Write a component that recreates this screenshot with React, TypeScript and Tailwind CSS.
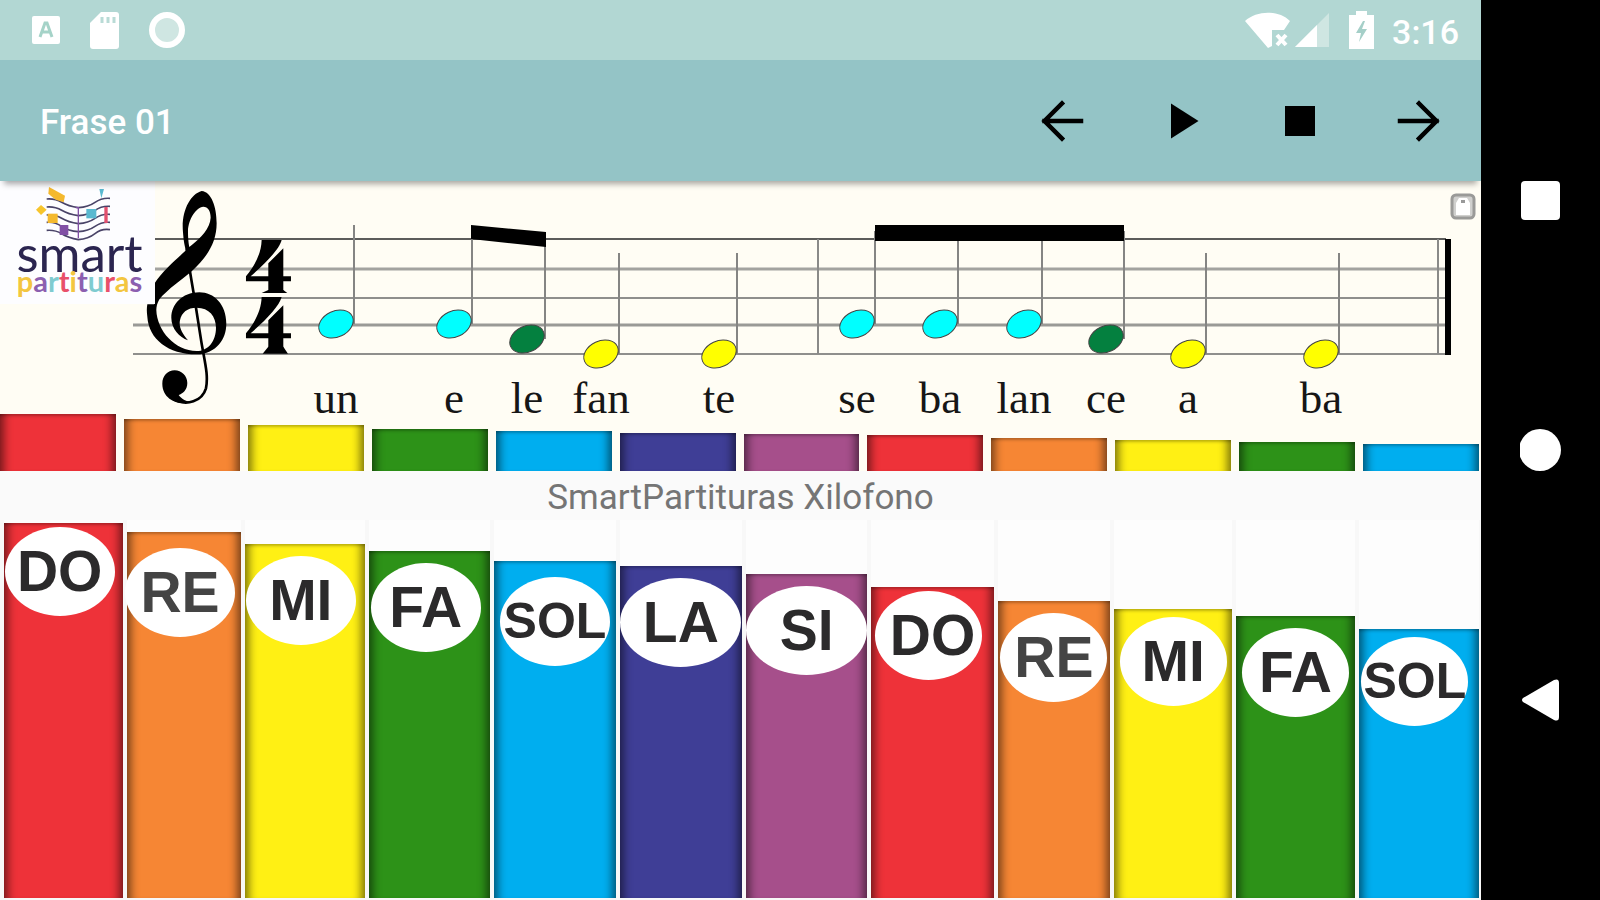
import { clsx } from 'clsx';

const RED = 'bg-[#ee3239]';
const ORANGE = 'bg-[#f68634]';
const YELLOW = 'bg-[#fff014]';
const GREEN = 'bg-[#2d9218]';
const BLUE = 'bg-[#00aeef]';
const INDIGO = 'bg-[#3f3e96]';
const PURPLE = 'bg-[#a64f8b]';

const edge =
  'shadow-[inset_12px_0_8px_-8px_rgba(0,0,0,0.5),inset_-12px_0_8px_-8px_rgba(0,0,0,0.5),inset_0_4px_3px_-2px_rgba(0,0,0,0.25)]';

// width is a flex weight, height is out of 378
const keys = [
  { note: 'DO', color: RED, width: 119, height: 375, place: 'pt-1 pr-2', oval: 'w-[110px]' },
  { note: 'RE', color: ORANGE, width: 113, height: 366, place: 'pt-4 pr-2', oval: 'w-[110px]', soft: true },
  { note: 'MI', color: YELLOW, width: 120, height: 354, place: 'pt-3 pr-2', oval: 'w-[110px]' },
  { note: 'FA', color: GREEN, width: 121, height: 347, place: 'pt-3 pr-2', oval: 'w-[110px]' },
  { note: 'SOL', color: BLUE, width: 121, height: 337, place: 'pt-4', oval: 'w-[110px]' },
  { note: 'LA', color: INDIGO, width: 122, height: 332, place: 'pt-3', oval: 'w-[121px]' },
  { note: 'SI', color: PURPLE, width: 121, height: 324, place: 'pt-3', oval: 'w-[121px]' },
  { note: 'DO', color: RED, width: 122, height: 311, place: 'pt-1 pr-2', oval: 'w-[107px] pl-2' },
  { note: 'RE', color: ORANGE, width: 112, height: 297, place: 'pt-3', oval: 'w-[107px]', soft: true },
  { note: 'MI', color: YELLOW, width: 118, height: 289, place: 'pt-2', oval: 'w-[107px]' },
  { note: 'FA', color: GREEN, width: 118, height: 282, place: 'pt-3', oval: 'w-[107px]' },
  { note: 'SOL', color: BLUE, width: 120, height: 269, place: 'pt-2 pr-2', oval: 'w-[107px]' },
];

const smallBars = [57, 52, 46, 42, 40, 38, 37, 36, 33, 31, 29, 27];

const CYAN = '#00ffff';
const DARK = '#04803f';
const SUN = '#ffff00';

const notes = [
  { text: 'un', x: 336, y: 143, top: 44, fill: CYAN },
  { text: 'e', x: 454, y: 143, top: 46, fill: CYAN },
  { text: 'le', x: 527, y: 158, top: 58, fill: DARK },
  { text: 'fan', x: 601, y: 173, top: 72, fill: SUN },
  { text: 'te', x: 719, y: 173, top: 72, fill: SUN },
  { text: 'se', x: 857, y: 143, top: 50, fill: CYAN },
  { text: 'ba', x: 940, y: 143, top: 50, fill: CYAN },
  { text: 'lan', x: 1024, y: 143, top: 50, fill: CYAN },
  { text: 'ce', x: 1106, y: 158, top: 50, fill: DARK },
  { text: 'a', x: 1188, y: 173, top: 72, fill: SUN },
  { text: 'ba', x: 1321, y: 173, top: 72, fill: SUN },
];

const staff = [
  { x: 155, y: 58, color: '#5c5c5a', w: 2 },
  { x: 155, y: 88, color: '#a3a39f', w: 3 },
  { x: 155, y: 117, color: '#8f8f8c', w: 2 },
  { x: 133, y: 144, color: '#9a9a96', w: 3 },
  { x: 133, y: 173, color: '#8f8f8c', w: 2 },
];

const logoLetters = [
  ['p', 'text-[#f3c640]'],
  ['a', 'text-[#8c5fb0]'],
  ['r', 'text-[#7fcbd0]'],
  ['t', 'text-[#e9506a]'],
  ['i', 'text-[#f3c640]'],
  ['t', 'text-[#8c5fb0]'],
  ['u', 'text-[#7fcbd0]'],
  ['r', 'text-[#e9506a]'],
  ['a', 'text-[#f3c640]'],
  ['s', 'text-[#8c5fb0]'],
];

function StatusBar() {
  return (
    <div className="flex h-15 shrink-0 items-center justify-between bg-[#b2d7d3] pr-[22px] pl-8 text-white">
      <div className="flex items-center gap-[30px]">
        <svg className="h-7 w-7" viewBox="0 0 28 28">
          <rect width="28" height="28" rx="2" fill="#fff" />
          <path d="M8 21 13 7h2l5 14M10 16h8" fill="none" stroke="#a5d3c8" strokeWidth="3" />
        </svg>
        <svg className="h-[37px] w-[29px]" viewBox="0 0 29 37">
          <path d="M11 0h15a3 3 0 0 1 3 3v31a3 3 0 0 1-3 3H3a3 3 0 0 1-3-3V11z" fill="#fff" />
          <path d="M12 5v6M18 5v6M24 5v6" stroke="#b9dbd6" strokeWidth="3" />
        </svg>
        <svg className="h-9 w-9" viewBox="0 0 36 36">
          <circle cx="18" cy="18" r="15" fill="#cfe6e2" stroke="#fff" strokeWidth="6" />
        </svg>
      </div>
      <div className="flex items-center">
        <svg className="h-[37px] w-[46px]" viewBox="0 0 46 37">
          <path d="M0 9C12-2 34-2 45 9L39 18H27V34L23 36z" fill="#fff" />
          <path d="M32 23 41 33M41 23 32 33" stroke="#fff" strokeWidth="4" />
        </svg>
        <svg className="ml-1 h-[34px] w-[34px]" viewBox="0 0 34 34">
          <path d="M34 0V34H0z" fill="#cfe6e2" />
          <path d="M22 12V34H0z" fill="#fff" />
        </svg>
        <svg className="ml-5 h-[38px] w-[25px]" viewBox="0 0 25 38">
          <path d="M7 0h11v4h7v34H0V4h7z" fill="#fff" />
          <path d="M14 10 7 22h5l-2 9 8-13h-5l3-8z" fill="#a5cfc8" />
        </svg>
        <span className="ml-[18px] pt-1 text-[34px] leading-10 font-medium">3:16</span>
      </div>
    </div>
  );
}

function Toolbar() {
  const actions = [
    { label: 'Anterior', d: 'M19.6 12H5M12 5 5 12l7 7', line: true },
    { label: 'Reproducir', d: 'M8 5v14l11-7z' },
    { label: 'Detener', d: 'M6 6h12v12H6z' },
    { label: 'Siguiente', d: 'M4.4 12H19M12 5l7 7-7 7', line: true },
  ];

  return (
    <header className="relative z-10 flex h-[121px] shrink-0 items-center justify-between bg-[#94c4c6] pr-8 pl-10 shadow-[0_7px_6px_-4px_rgba(0,0,0,0.35)]">
      <h1 className="pt-1 text-[35px] leading-10 font-medium text-white">Frase 01</h1>
      <div className="flex gap-[59px]">
        {actions.map((action) => (
          <button key={action.label} aria-label={action.label} className="size-15">
            <svg className="size-15" viewBox="0 0 24 24">
              <path
                d={action.d}
                fill={action.line ? 'none' : '#000'}
                stroke={action.line ? '#000' : 'none'}
                strokeWidth="1.8"
                strokeLinecap="square"
              />
            </svg>
          </button>
        ))}
      </div>
    </header>
  );
}

function Logo() {
  return (
    <div className="absolute top-0 left-0 flex h-[123px] w-[155px] flex-col items-center bg-[#fdfdff]">
      <svg className="h-15 w-24 shrink-0" viewBox="95 14 288 180">
        <g fill="none" stroke="#4a4468" strokeWidth="5">
          <path d="M145 68Q170 66 190 78T240 94Q270 92 290 78T335 66" />
          <path d="M145 92Q170 90 190 102T240 118Q270 116 290 102T335 90" />
          <path d="M145 116Q170 114 190 126T240 142Q270 140 290 126T335 114" />
          <path d="M145 138Q170 136 190 150T240 166Q270 164 290 150T335 138" />
          <path d="M145 162Q170 160 190 172T240 190Q270 188 290 172T335 160" />
        </g>
        <path d="M152 32 200 58 196 78 172 70 150 52z" fill="#f4b92e" />
        <path d="M113 100 128 86 145 100 128 116z" fill="#f7c52d" />
        <path d="M148 112h30v28h-30z" fill="#f4b92e" />
        <path d="M184 146h26v30h-26z" fill="#8150a5" />
        <path d="M264 98h30v28h-30z" fill="#5ab9d0" />
        <path d="M303 38h14l-8 28z" fill="#5ab9d0" />
        <path d="M318 92h10v48h-10z" fill="#e2506e" />
        <path d="M232 94h8v92" fill="none" stroke="#8150a5" strokeWidth="4" />
      </svg>
      <span className="-mt-3 pl-1 font-[Lato] text-[51px] leading-12 text-[#2b2550]">smart</span>
      <span className="-mt-3 pl-1 font-[Lato] text-[29px] leading-8 font-bold [font-variant-ligatures:none]">
        {logoLetters.map(([letter, color], i) => (
          <span key={i} className={color}>
            {letter}
          </span>
        ))}
      </span>
    </div>
  );
}

function Score() {
  const four =
    'M785 195H845C838 222 800 262 752 304H805V265L850 220V304H873V319H850V350H805V319H738V304C764 272 784 236 785 195z';

  return (
    <section className="relative shrink-0 bg-[#fffdf4]">
      <svg className="block w-full overflow-visible" viewBox="0 0 1481 233">
        {staff.map((line) => (
          <path key={line.y} d={`M${line.x} ${line.y}H1446`} stroke={line.color} strokeWidth={line.w} />
        ))}
        <path d="M818 58V173M1438 58V173" stroke="#8a8a88" strokeWidth="2" />
        <path d="M1445 58h6v116h-6z" />

        {/* clave de sol y compás */}
        <g transform="translate(0 -6) scale(0.3333)">
          <path
            fillRule="evenodd"
            d="M605 48C570 58 543 110 549 172C551 198 554 214 558 226C530 252 488 288 463 326C462 350 462 365 462 388L442 388C440 400 440 410 442 425C446 492 505 538 590 538C650 536 679 492 679 446C679 388 642 352 598 352C545 352 514 390 514 428C514 462 538 486 564 496C545 474 536 455 540 436C545 412 562 398 590 398C628 398 648 425 648 458C648 498 625 528 590 528C526 528 471 468 469 405C470 384 478 370 492 358C520 330 548 312 576 288C624 244 650 200 650 145C650 95 634 50 605 48zM610 95C587 98 566 132 564 167C564 190 566 204 568 216C604 188 630 160 632 128C632 108 624 95 610 95z"
          />
          <path
            d="M560 220C566 270 575 320 582 360L604 500C614 560 626 600 618 640C606 680 560 692 525 675"
            fill="none"
            stroke="#000"
            strokeWidth="8"
          />
          <path d="M524 586C545 586 562 603 562 624C562 645 548 656 536 660C545 672 560 680 575 682C540 692 487 676 487 626C487 603 503 586 524 586z" />
          <path d={four} />
          <path d={four} transform="translate(0 171)" />
          <path d="M805 345H850L862 354H785zM805 515H850L864 536H788z" />
        </g>

        {notes.map((n) => (
          <g key={n.x}>
            <path d={`M${n.x + 18} ${n.top}V${n.y}`} stroke="#858583" strokeWidth="2" />
            <ellipse
              rx="18"
              ry="13"
              fill={n.fill}
              stroke="#444"
              strokeWidth="1"
              transform={`translate(${n.x} ${n.y}) rotate(-25)`}
            />
            <text
              x={n.x}
              y="232"
              textAnchor="middle"
              className="fill-[#161616] font-['Liberation_Serif',serif] text-[45px]"
            >
              {n.text}
            </text>
          </g>
        ))}
        <path d="M471 44 546 51V66L471 58zM875 44h249v16H875z" />
      </svg>

      <div className="flex h-[57px] items-end gap-2 pr-[2px]">
        {smallBars.map((height, i) => (
          <div key={i} className={clsx('flex-1', keys[i].color, edge)} style={{ height }} />
        ))}
      </div>

      <Logo />
      <button aria-label="Bloquear" className="absolute top-[12px] right-[5px]">
        <svg className="h-[27px] w-[26px]" viewBox="0 0 26 27">
          <rect x="2" y="2" width="22" height="23" rx="4" fill="#d0d0ce" stroke="#9a9a98" strokeWidth="3" />
          <path d="M6 10 9 5h8l3 5v12H6z" fill="#fff" />
          <path d="M11 10V7h4v3z" fill="#999" />
        </svg>
      </button>
    </section>
  );
}

function Xylophone() {
  return (
    <section className="flex min-h-0 flex-1 gap-1 bg-[#f8f8f8] pr-[2px] pb-[2px] pl-1">
      {keys.map((key, i) => (
        <div
          key={i}
          className="flex min-w-0 basis-0 items-end bg-[#fdfdfd]"
          style={{ flexGrow: key.width }}
        >
          <button
            className={clsx('flex w-full items-start justify-center', key.color, key.place, edge)}
            style={{ height: `${(key.height / 378) * 100}%` }}
          >
            <span
              className={clsx(
                "flex h-[89px] shrink-0 items-center justify-center rounded-[50%] bg-white font-['Liberation_Sans',sans-serif] font-bold",
                key.oval,
                key.soft ? 'text-[#444]' : 'text-[#2b2a2b]',
                key.note === 'SOL' ? 'text-[50px]' : 'text-[57px]',
              )}
            >
              {key.note}
            </span>
          </button>
        </div>
      ))}
    </section>
  );
}

function NavBar() {
  return (
    <nav className="flex w-[119px] shrink-0 flex-col items-center justify-between bg-black py-[179px]">
      <button aria-label="Recientes">
        <svg className="size-[42px]" viewBox="0 0 42 42" fill="#fff">
          <rect x="1" y="2" width="39" height="39" rx="4" />
        </svg>
      </button>
      <button aria-label="Inicio">
        <svg className="size-[42px]" viewBox="0 0 42 42" fill="#fff">
          <circle cx="20" cy="21" r="21" />
        </svg>
      </button>
      <button aria-label="Atrás">
        <svg className="size-[42px]" viewBox="0 0 42 42" fill="#fff">
          <path d="M3 19 34 1Q39-1 39 4V38Q39 43 34 41L3 23Q1 21 3 19z" />
        </svg>
      </button>
    </nav>
  );
}

export default function App() {
  return (
    <div className="flex h-screen overflow-hidden bg-[#fafafa] font-[Roboto,sans-serif]">
      <main className="flex min-w-0 flex-1 flex-col">
        <StatusBar />
        <Toolbar />
        <Score />
        <h2 className="flex h-[49px] shrink-0 items-center justify-center pt-1 text-[35px] leading-10 text-[#757575]">
          SmartPartituras Xilofono
        </h2>
        <Xylophone />
      </main>
      <NavBar />
    </div>
  );
}
